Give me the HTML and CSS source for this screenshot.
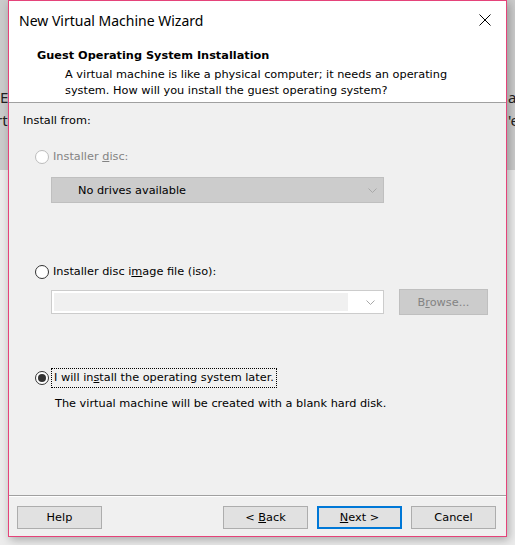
FILE: index.html
```html
<!DOCTYPE html>
<html>
<head>
<meta charset="utf-8">
<link rel="stylesheet" href="styles.css">
</head>
<body>
<div class="desk">
  <div class="behind">
    <div class="behind-line l1"><span class="frag-left">.Er</span><span class="frag-right">a</span></div>
    <div class="behind-line l2"><span class="frag-left">rt</span><span class="frag-right">'e</span></div>
  </div>
  <div class="dialog">
    <div class="titlebar">
      <span class="title">New Virtual Machine Wizard</span>
      <svg class="close" width="12" height="12" viewBox="0 0 12 12"><path d="M0.5 0.5 L11.5 11.5 M11.5 0.5 L0.5 11.5" stroke="#000" stroke-width="1" fill="none"/></svg>
    </div>
    <div class="header">
      <div class="h-title">Guest Operating System Installation</div>
      <div class="h-desc">A virtual machine is like a physical computer; it needs an operating system. How will you install the guest operating system?</div>
    </div>
    <div class="content">
      <div class="label">Install from:</div>
      <div class="radio-row r1 disabled"><span class="radio"></span><span class="rlabel">Installer <u>d</u>isc:</span></div>
      <div class="combo combo-dis"><span class="combo-text">No drives available</span><svg class="chev" width="9" height="5" viewBox="0 0 9 5"><path d="M0.5 0.5 L4.5 4.5 L8.5 0.5" stroke="#a8a8a8" fill="none"/></svg></div>
      <div class="radio-row r2"><span class="radio"></span><span class="rlabel">Installer disc i<u>m</u>age file (iso):</span></div>
      <div class="iso-row">
        <div class="combo combo-edit"><span class="edit-fill"></span><svg class="chev" width="9" height="5" viewBox="0 0 9 5"><path d="M0.5 0.5 L4.5 4.5 L8.5 0.5" stroke="#a8a8a8" fill="none"/></svg></div>
        <div class="btn-browse"><span>B<u>r</u>owse...</span></div>
      </div>
      <div class="radio-row r3"><span class="radio checked"></span><span class="rlabel focus">I will in<u>s</u>tall the operating system later.</span></div>
      <div class="note">The virtual machine will be created with a blank hard disk.</div>
    </div>
    <div class="footer">
      <div class="btn"><span>Help</span></div>
      <div class="spacer"></div>
      <div class="btn"><span>&lt; <u>B</u>ack</span></div>
      <div class="btn default"><span><u>N</u>ext &gt;</span></div>
      <div class="btn"><span>Cancel</span></div>
    </div>
  </div>
</div>
</body>
</html>
```
FILE: styles.css
```css
html, body {
  margin: 0;
  padding: 0;
}
body {
  width: 515px;
  height: 545px;
  overflow: hidden;
  background: #ececec;
  font-family: "DejaVu Sans", sans-serif;
  font-size: 11.3px;
  color: #000;
}
.desk {
  position: relative;
  width: 515px;
  height: 545px;
  overflow: hidden;
}
.behind {
  height: 170px;
  background: #cbcbcb;
  font-family: "Noto Sans", sans-serif;
  font-size: 15px;
  color: #222;
  position: relative;
}
.behind-line {
  position: absolute;
  left: 0;
  width: 515px;
  height: 22px;
  line-height: 22px;
}
.l1 { top: 86px; }
.l2 { top: 109px; }
.frag-left {
  position: absolute;
  left: -4px;
}
.frag-right {
  position: absolute;
  left: 508px;
}

.dialog {
  position: absolute;
  left: 8px;
  top: 0;
  width: 497px;
  height: 535px;
  border: 1px solid #e5437a;
  background: #f0f0f0;
  box-shadow: 2px 3px 9px rgba(0, 0, 0, 0.28);
  display: flex;
  flex-direction: column;
}
.titlebar {
  height: 38px;
  background: #fff;
  display: flex;
  align-items: center;
  padding-left: 10px;
  padding-right: 15px;
}
.title {
  font-family: "Noto Sans", sans-serif;
  font-size: 14px;
  flex: 1;
  color: #000;
}
.close {
  display: block;
}
.header {
  background: #fff;
  padding: 9px 0 2px 28px;
  border-bottom: 1px solid #a0a0a0;
  height: 52px;
}
.h-title {
  font-weight: bold;
  line-height: 16px;
}
.h-desc {
  margin-top: 3px;
  margin-left: 28px;
  line-height: 16px;
  width: 400px;
}
.content {
  flex: 1;
  padding-left: 14px;
  border-bottom: 1px solid #a0a0a0;
}
.label {
  margin-top: 10px;
  line-height: 16px;
}
.radio-row {
  display: flex;
  align-items: center;
  height: 16px;
  margin-left: 12px;
}
.r1 { margin-top: 20px; }
.r2 { margin-top: 61px; }
.r3 { margin-top: 55px; }
.radio {
  width: 12px;
  height: 12px;
  border: 1px solid #333;
  border-radius: 50%;
  background: #fff;
  margin-right: 4px;
  box-sizing: content-box;
  position: relative;
  flex: none;
}
.disabled .radio {
  border-color: #bcbcbc;
}
.disabled .rlabel {
  color: #838383;
}
.radio.checked::after {
  content: "";
  position: absolute;
  left: 2px;
  top: 2px;
  width: 8px;
  height: 8px;
  border-radius: 50%;
  background: #333;
}
.rlabel {
  line-height: 16px;
}
.focus {
  outline: 1px dotted #000;
  outline-offset: 1px;
  padding: 0 1px;
}
.combo {
  box-sizing: border-box;
  width: 333px;
  display: flex;
  align-items: center;
  position: relative;
}
.combo-dis {
  margin-top: 12px;
  margin-left: 28px;
  height: 26px;
  background: #cccccc;
  border: 1px solid #bfbfbf;
  padding-left: 26px;
}
.combo-text {
  flex: 1;
}
.chev {
  display: block;
  margin-right: 6px;
}
.iso-row {
  display: flex;
  align-items: flex-start;
  margin-top: 9px;
  margin-left: 28px;
}
.combo-edit {
  margin-top: 1px;
  height: 24px;
  background: #fff;
  border: 1px solid #cccccc;
  padding: 2px;
}
.edit-fill {
  display: block;
  height: 100%;
  flex: 1;
  background: #f0f0f0;
  margin-right: 18px;
}
.btn-browse {
  box-sizing: border-box;
  margin-left: 15px;
  width: 89px;
  height: 26px;
  background: #cccccc;
  border: 1px solid #bfbfbf;
  color: #838383;
  display: flex;
  align-items: center;
  justify-content: center;
}
.note {
  margin-top: 10px;
  margin-left: 32px;
  line-height: 16px;
}
.footer {
  border-top: 1px solid #fff;
  height: 40px;
  display: flex;
  align-items: flex-start;
  padding: 9px 10px 0 8px;
  box-sizing: border-box;
  gap: 9px;
}
.spacer {
  flex: 1;
}
.btn {
  box-sizing: border-box;
  width: 85px;
  height: 23px;
  background: #e1e1e1;
  border: 1px solid #adadad;
  display: flex;
  align-items: center;
  justify-content: center;
}
.btn.default {
  border: 2px solid #0078d7;
}
```
